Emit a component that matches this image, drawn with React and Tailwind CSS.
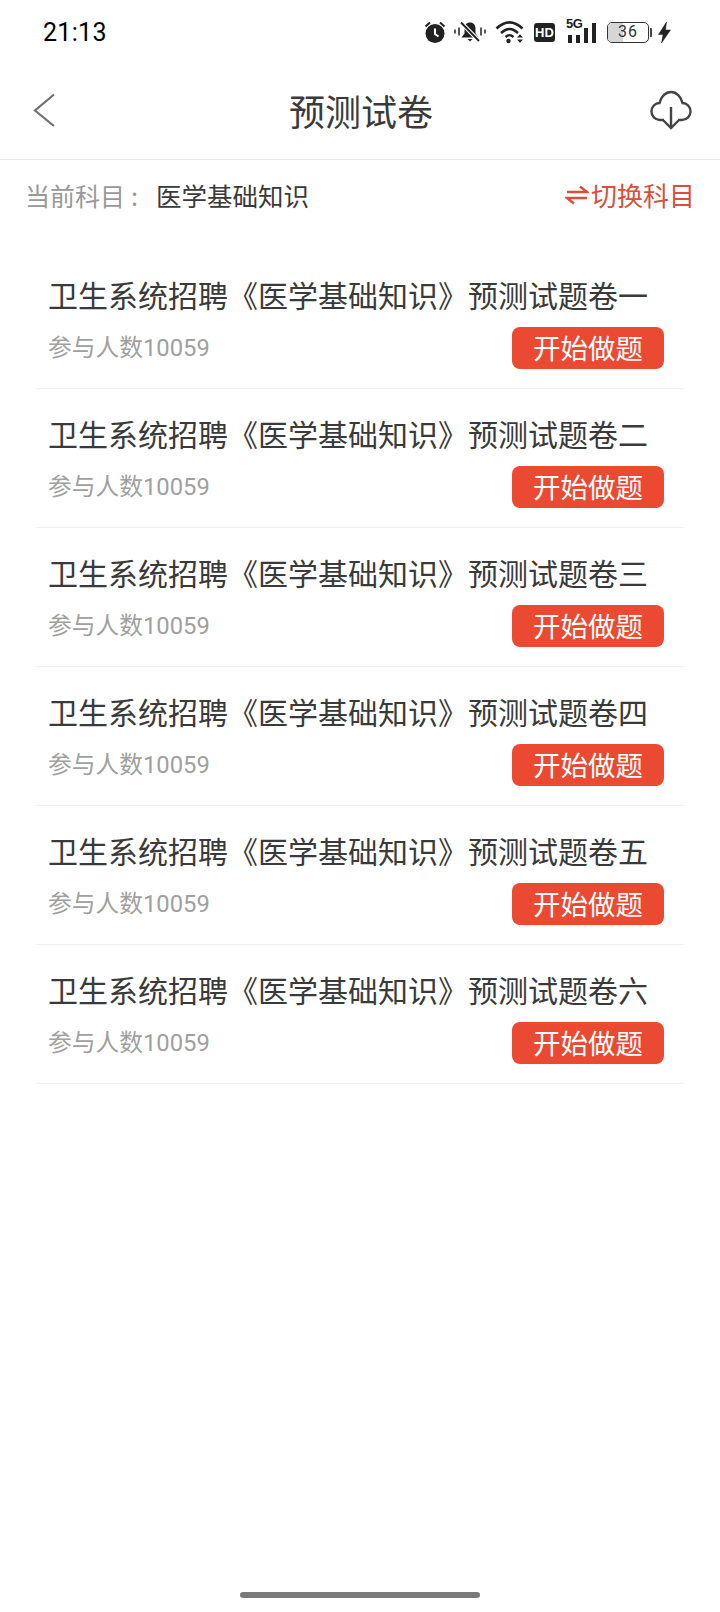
import React from "react";

const cjk = { fontFamily: '"Noto Sans CJK SC", "Noto Sans", sans-serif' };
const items = ["一", "二", "三", "四", "五", "六"];

function StatusIcons() {
  return (
    <div className="flex items-center h-[26px] text-[#222]">
      <svg width="22" height="24" viewBox="0 0 22 24">
        <circle cx="11" cy="13.500" r="9.500" fill="#222" />
        <path d="M11 8.500V14l3.500 2.500" stroke="#fff" strokeWidth="2" fill="none" />
        <path d="M1.500 6.500 6 2.500M20.500 6.500 16 2.500" stroke="#222" strokeWidth="2" fill="none" />
      </svg>
      <svg width="32" height="24" viewBox="0 0 32 24" className="ml-[8px]">
        <path d="M16 2.500c-3.500 0-5.500 2.500-5.500 6v5L7.500 17.500h17L21.500 13.500v-5c0-3.500-2-6-5.500-6z" fill="#222" />
        <path d="M13.500 19h5l-2.500 2.500z" fill="#222" />
        <path d="M7 2.500 26 22" stroke="#fff" strokeWidth="4" />
        <path d="M7 2.500 25 21" stroke="#222" strokeWidth="1.800" />
        <path d="M1 9.500v4M5 7.500v8M27 7.500v8M31 9.500v4" stroke="#222" strokeWidth="1.500" />
      </svg>
      <svg width="30" height="24" viewBox="0 0 30 24" className="ml-[9px]">
        <path d="M1.500 8.500C10 .5 19 .5 27.500 8.500" stroke="#222" strokeWidth="2.600" fill="none" />
        <path d="M6 13c6-5.500 11-5.500 17 0" stroke="#222" strokeWidth="2.600" fill="none" />
        <path d="M10.500 17c3-2.500 5-2.500 8 0" stroke="#222" strokeWidth="2.400" fill="none" />
        <circle cx="13.500" cy="21" r="2.200" fill="#222" />
        <path d="M22 17.500h6l-3-3.200zM22 19.500h6l-3 3.200z" fill="#222" />
      </svg>
      <div
        className="ml-[9px] w-[21px] h-[19px] rounded-[3px] bg-[#222] text-white flex items-center justify-center text-[13px] font-bold leading-none"
        style={{ fontFamily: '"Liberation Sans", sans-serif' }}
      >
        HD
      </div>
      <div className="ml-[11px] relative w-[31px] h-[22px]">
        <span
          className="absolute left-0 top-[-3px] text-[13px] font-bold leading-[12px] tracking-[-0.5px] text-[#222]"
          style={{ fontFamily: '"Liberation Sans", sans-serif' }}
        >
          5G
        </span>
        <div className="absolute left-[2px] bottom-0 w-[4px] h-[8px] bg-[#222]" />
        <div className="absolute left-[10px] bottom-0 w-[4px] h-[8px] bg-[#222]" />
        <div className="absolute left-[18px] bottom-0 w-[4px] h-[15px] bg-[#222]" />
        <div className="absolute left-[26px] bottom-0 w-[4px] h-[20px] bg-[#222]" />
      </div>
      <div className="ml-[10px] relative w-[42px] h-[21px] rounded-[5px] border-[1.500px] border-[#333] overflow-hidden bg-white">
        <div className="h-full w-[15px] bg-[#d6d6d6]" />
        <span
          className="absolute inset-0 flex items-center justify-center text-[16px] leading-none text-[#333] tracking-[1px]"
          style={{ fontFamily: "Roboto, sans-serif" }}
        >
          36
        </span>
      </div>
      <div className="ml-[1px] w-[2px] h-[9px] rounded-r-[1px] bg-[#444]" />
      <svg width="13" height="21" viewBox="0 0 13 21" className="ml-[6px]">
        <path d="M8.500 0 .5 12.500h4.500L3.500 21 12.500 8H7.500z" fill="#222" stroke="#222" strokeWidth="0.500" />
      </svg>
    </div>
  );
}

export default function App() {
  return (
    <div className="w-[720px] h-[1612px] bg-white flex flex-col" style={cjk}>
      <div className="h-[64px] flex items-center justify-between pl-[43px] pr-[49px]">
        <span className="text-[25px] leading-none font-normal text-black tracking-[0.3px]" style={{ fontFamily: "Roboto, sans-serif" }}>
          21:13
        </span>
        <StatusIcons />
      </div>

      <div className="h-[96px] border-b border-[#e8e8e8] flex items-center pl-[30px] pr-[28px] pb-[3px]">
        <div className="flex-1 flex justify-start">
          <svg width="28" height="36" viewBox="0 0 28 36">
            <path d="M24 2.500 5 18.500 24 34" stroke="#707070" strokeWidth="2.200" fill="none" />
          </svg>
        </div>
        <span className="text-[36px] leading-none text-[#3a3a3a]">预测试卷</span>
        <div className="flex-1 flex justify-end">
          <svg width="42" height="40" viewBox="0 0 42 40">
            <path
              d="M14 30H10C5 30 1.500 26 1.500 21.500S5 13 9.500 13C11 6.500 15.500 2 21 2s10 4.500 11.500 11C37 13 40.500 17 40.500 21.500S37 30 32 30h-4"
              stroke="#444"
              strokeWidth="2.400"
              fill="none"
            />
            <path d="M21 17V38M13.500 30.500 21 38l7.500-7.500" stroke="#444" strokeWidth="2.400" fill="none" />
          </svg>
        </div>
      </div>

      <div className="h-[70px] flex items-center justify-between pl-[25px] pr-[25px]">
        <div className="flex items-center">
          <span className="w-[131px] text-[25px] leading-none text-[#999]">
            当前科目<span className="ml-[6px]">:</span>
          </span>
          <span className="text-[25.500px] leading-none text-[#3a3a3a]">医学基础知识</span>
        </div>
        <div className="flex items-center text-[#d8503c]">
          <svg width="24" height="20" viewBox="0 0 24 20" className="mr-[2px]">
            <path d="M2 7H22L15 1.500M22 13H2L9 18.500" stroke="#d8503c" strokeWidth="2.400" fill="none" />
          </svg>
          <span className="text-[26px] leading-none">切换科目</span>
        </div>
      </div>

      <div className="mt-[20px] px-[36px] flex flex-col">
        {items.map((n) => (
          <div key={n} className="h-[139px] border-b border-[#f0f0f0] pl-[12px] pr-[20px] flex flex-col shrink-0">
            <div className="mt-[22px] text-[30px] leading-[44px] text-[#3a3a3a] whitespace-nowrap">
              卫生系统招聘《医学基础知识》预测试题卷{n}
            </div>
            <div className="mt-[11px] flex items-center justify-between">
              <span className="pt-[2px] text-[23.750px] leading-none text-[#a0a0a0]" style={{ fontFamily: 'Roboto, "Noto Sans CJK SC", sans-serif' }}>
                参与人数10059
              </span>
              <div className="w-[152px] h-[42px] rounded-[8px] bg-[#ea4a32] text-white text-[27.500px] leading-none flex items-center justify-center">
                开始做题
              </div>
            </div>
          </div>
        ))}
      </div>

      <div className="mt-auto mb-[14px] mx-auto w-[240px] h-[6px] rounded-full bg-[#7a7a7a]" />
    </div>
  );
}
